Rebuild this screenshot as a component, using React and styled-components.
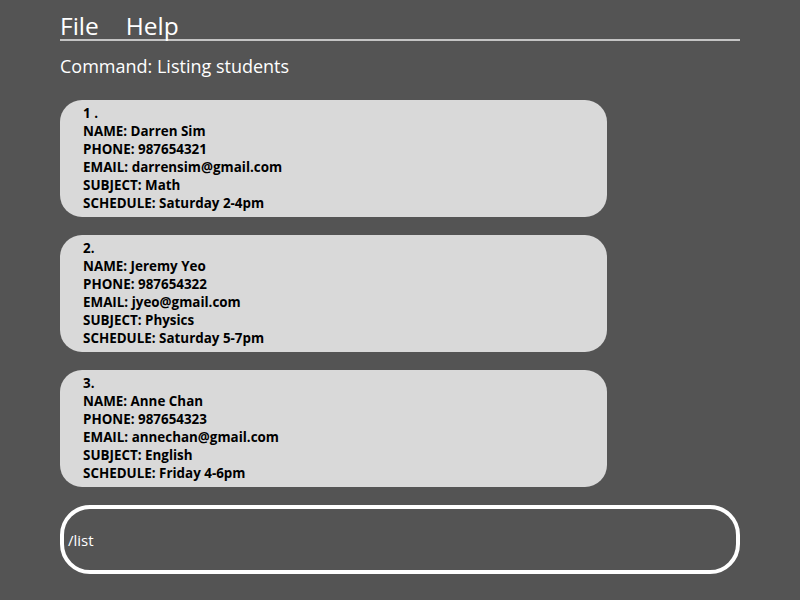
import React from 'react';
import styled, { createGlobalStyle } from 'styled-components';

const GlobalStyle = createGlobalStyle`
  html, body {
    margin: 0;
    padding: 0;
    background: #545454;
    font-family: "Open Sans", "Noto Sans", sans-serif;
  }
`;

const Page = styled.div`
  width: 680px;
  height: 600px;
  padding: 0 60px;
  display: flex;
  flex-direction: column;
`;

const MenuBar = styled.div`
  display: flex;
  gap: 27px;
  padding-top: 11px;
  height: 28px;
  border-bottom: 2px solid #c4c4c4;
`;

const MenuItem = styled.span`
  color: #fff;
  font-size: 24.5px;
  line-height: 30px;
`;

const Status = styled.div`
  color: #fff;
  font-size: 18px;
  line-height: 24px;
  margin-top: 13px;
`;

const List = styled.div`
  display: flex;
  flex-direction: column;
  gap: 18px;
  margin-top: 22px;
`;

const Card = styled.div`
  width: 547px;
  height: 117px;
  box-sizing: border-box;
  background: #d9d9d9;
  border-radius: 22px;
  padding: 4px 23px;
  color: #000;
  font-weight: 700;
  font-size: 13.4px;
  line-height: 18px;
`;

const Line = styled.div``;

const CommandBox = styled.div`
  margin-top: 18px;
  height: 69px;
  box-sizing: border-box;
  border: 4px solid #fff;
  border-radius: 30px;
  display: flex;
  align-items: center;
  padding-left: 4px;
  color: #fff;
  font-size: 15px;
`;

const students = [
  { idx: '1 .', name: 'Darren Sim', phone: '987654321', email: 'darrensim@gmail.com', subject: 'Math', schedule: 'Saturday 2-4pm' },
  { idx: '2.', name: 'Jeremy Yeo', phone: '987654322', email: 'jyeo@gmail.com', subject: 'Physics', schedule: 'Saturday 5-7pm' },
  { idx: '3.', name: 'Anne Chan', phone: '987654323', email: 'annechan@gmail.com', subject: 'English', schedule: 'Friday 4-6pm' },
];

export default function App() {
  return (
    <Page>
      <GlobalStyle />
      <MenuBar>
        <MenuItem>File</MenuItem>
        <MenuItem>Help</MenuItem>
      </MenuBar>
      <Status>Command: Listing students</Status>
      <List>
        {students.map((s) => (
          <Card key={s.idx}>
            <Line>{s.idx}</Line>
            <Line>NAME: {s.name}</Line>
            <Line>PHONE: {s.phone}</Line>
            <Line>EMAIL: {s.email}</Line>
            <Line>SUBJECT: {s.subject}</Line>
            <Line>SCHEDULE: {s.schedule}</Line>
          </Card>
        ))}
      </List>
      <CommandBox>/list</CommandBox>
    </Page>
  );
}
